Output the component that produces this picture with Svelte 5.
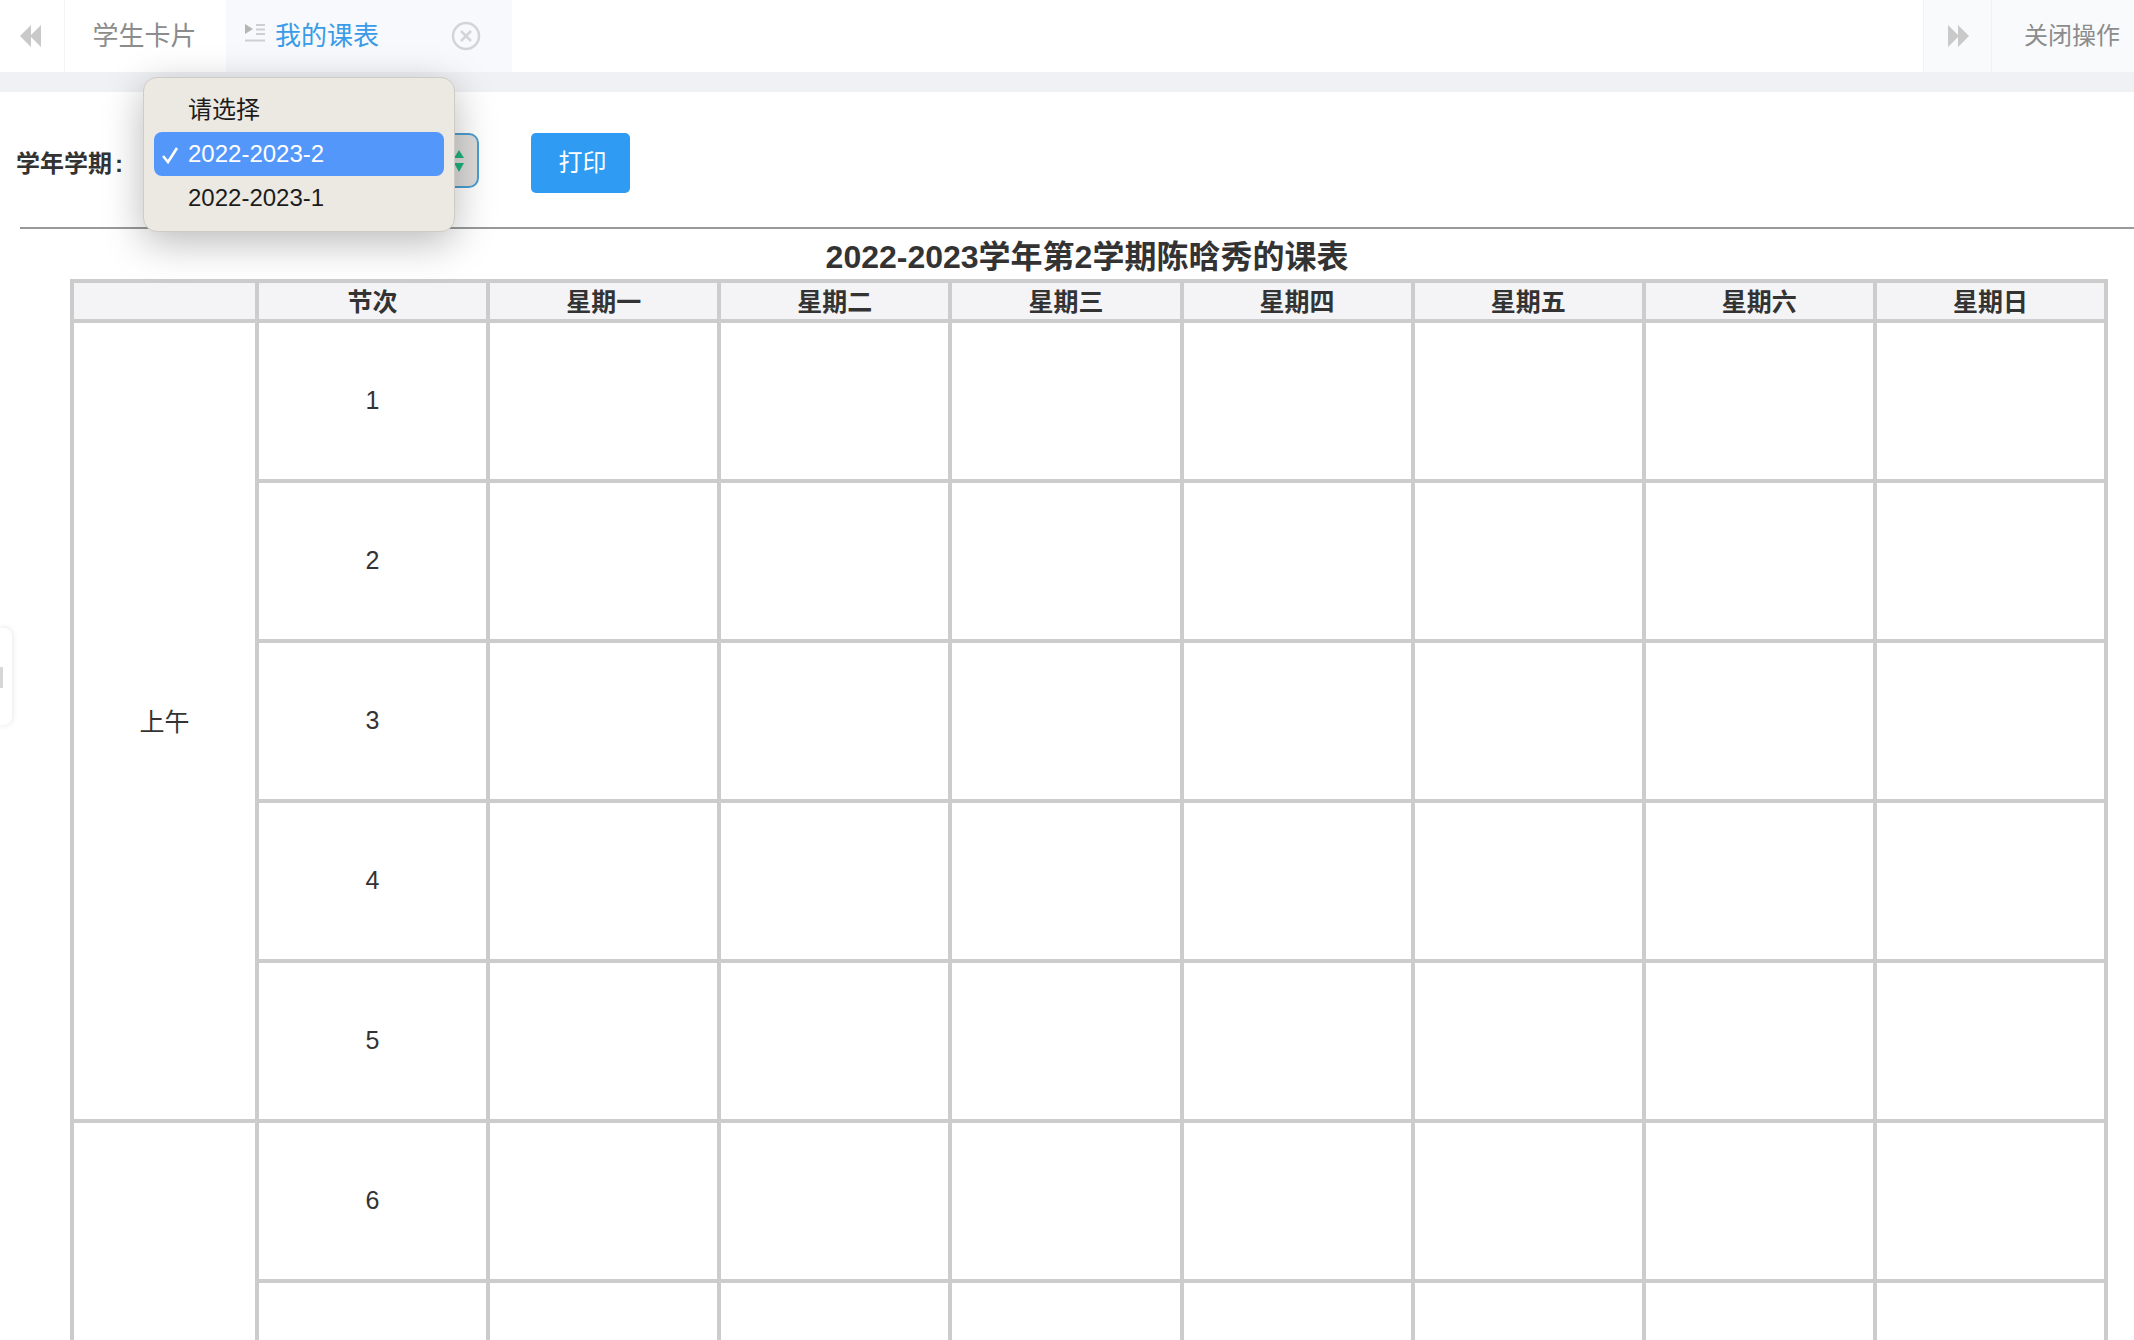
<script>
	const days = ['星期一', '星期二', '星期三', '星期四', '星期五', '星期六', '星期日'];
	const periods = [1, 2, 3, 4, 5, 6];
</script>

<div class="page">
	<div class="tabs">
		<button class="nav nav--left" aria-label="向左">
			<svg width="22" height="24" viewBox="0 0 22 24"><path d="M11 1v22L0 12zM21 1v22L10 12z" fill="#c9c9c9" /></svg>
		</button>
		<div class="tab">学生卡片</div>
		<div class="tab tab--active">
			<svg class="tab__icon" width="22" height="22" viewBox="0 0 22 22">
				<path d="M1 2l8 5-8 5z" fill="#b5b5b5" />
				<path d="M12 3h9M12 7.500h9M12 12h9M1 18.500h20" stroke="#cfcfcf" stroke-width="2" fill="none" />
			</svg>
			<span>我的课表</span>
			<svg class="tab__close" width="30" height="30" viewBox="0 0 30 30">
				<circle cx="15" cy="15" r="13" fill="none" stroke="#d4d4d4" stroke-width="2.500" />
				<path d="M10 10l10 10M20 10L10 20" stroke="#d4d4d4" stroke-width="2.500" />
			</svg>
		</div>
		<div class="tabs__space"></div>
		<button class="nav nav--right" aria-label="向右">
			<svg width="22" height="24" viewBox="0 0 22 24"><path d="M1 1v22l11-11zM11 1v22l11-11z" fill="#c9c9c9" /></svg>
		</button>
		<div class="tabs__close">关闭操作</div>
	</div>
	<div class="band"></div>

	<div class="filter">
		<label class="filter__label" for="term">学年学期<span class="colon">:</span></label>
		<div class="select" id="term">
			<svg class="select__arrows" width="12" height="24" viewBox="0 0 12 24">
				<path d="M6 1l5 8H1zM1 14h10l-5 9z" fill="#1fb57f" />
			</svg>
			<ul class="menu">
				<li>请选择</li>
				<li class="selected">
					<svg class="check" width="18" height="20" viewBox="0 0 18 20"><path d="M2 11l5 6L16 3" fill="none" stroke="#fff" stroke-width="2.600" /></svg>
					2022-2023-2
				</li>
				<li>2022-2023-1</li>
			</ul>
		</div>
		<button class="print">打印</button>
	</div>

	<div class="sheet">
		<h1>2022-2023学年第2学期陈晗秀的课表</h1>
		<table>
			<colgroup>
				<col class="col-part" />
				<col span="8" />
			</colgroup>
			<thead>
				<tr>
					<th></th>
					<th>节次</th>
					{#each days as day}
						<th>{day}</th>
					{/each}
				</tr>
			</thead>
			<tbody>
				{#each periods as period}
					<tr>
						{#if period === 1}
							<td rowspan="5">上午</td>
						{:else if period === 6}
							<td rowspan="2"></td>
						{/if}
						<td>{period}</td>
						{#each days as day}
							<td></td>
						{/each}
					</tr>
				{/each}
				<tr>
					<td></td>
					{#each days as day}
						<td></td>
					{/each}
				</tr>
			</tbody>
		</table>
	</div>

	<div class="handle"><span></span></div>
</div>

<style>
	:global(body) {
		margin: 0;
		background: #fff;
	}

	.page {
		position: relative;
		height: 1340px;
		overflow: hidden;
		font-family: 'Liberation Sans', 'Noto Sans CJK SC', sans-serif;
		color: #333;
	}

	.tabs {
		display: flex;
		height: 72px;
		align-items: stretch;
		color: #8c8c8c;
		font-size: 26px;
	}

	.nav {
		width: 65px;
		flex: none;
		padding: 0 3px 0 0;
		border: 0;
		background: #fff;
		display: flex;
		align-items: center;
		justify-content: center;
	}

	.nav--left {
		border-right: 1px solid #f3f4f6;
		border-bottom-left-radius: 12px;
	}

	.nav--right {
		width: 69px;
		padding: 0;
		background: #f9fafc;
		border-left: 1px solid #f1f2f5;
		border-right: 1px solid #f1f2f5;
	}

	.tab {
		width: 161px;
		padding: 0 2px 6px 0;
		box-sizing: border-box;
		display: flex;
		align-items: center;
		justify-content: center;
	}

	.tab--active {
		width: 286px;
		background: #f7f9fd;
		color: #3a9be8;
		justify-content: flex-start;
		padding-left: 18px;
	}

	.tab__icon {
		margin-right: 9px;
	}

	.tab__close {
		margin: 6px 0 0 72px;
	}

	.tabs__space {
		flex: 1;
	}

	.tabs__close {
		width: 142px;
		background: #f9fafc;
		display: flex;
		align-items: center;
		padding: 0 0 6px 32px;
		box-sizing: border-box;
		font-size: 24px;
	}

	.band {
		height: 20px;
		background: #f0f1f5;
	}

	.filter {
		height: 137px;
		padding: 41px 0 0 16px;
		box-sizing: border-box;
		display: flex;
		align-items: flex-start;
		border-bottom: 2px solid #999;
		position: relative;
	}

	.filter__label {
		width: 127px;
		font-size: 24px;
		font-weight: 700;
		line-height: 44px;
		margin-top: 9px;
	}

	.colon {
		margin-left: 3px;
	}

	.select {
		position: relative;
		width: 336px;
		height: 55px;
		box-sizing: border-box;
		border: 2px solid #4a9fd0;
		border-radius: 10px;
		background: linear-gradient(90deg, #f2f2f2, #dedcda);
	}

	.select__arrows {
		position: absolute;
		right: 12px;
		top: 14px;
	}

	.menu {
		position: absolute;
		left: -2px;
		top: -58px;
		width: 312px;
		height: 155px;
		box-sizing: border-box;
		margin: 0;
		padding: 10px;
		list-style: none;
		background: #ece8e2;
		border: 1px solid #cfcbc6;
		border-radius: 14px;
		box-shadow: 0 10px 40px rgba(0, 0, 0, 0.28);
		color: #1c1c1c;
		font-size: 24px;
	}

	.menu li {
		position: relative;
		height: 44px;
		line-height: 44px;
		padding-left: 34px;
		border-radius: 8px;
	}

	.menu .selected {
		background: #5397fb;
		color: #fff;
	}

	.check {
		position: absolute;
		left: 7px;
		top: 13px;
	}

	.print {
		margin-left: 52px;
		width: 99px;
		height: 60px;
		padding: 0 0 5px 4px;
		border: 0;
		border-radius: 5px;
		background: #2f9bf3;
		color: #fff;
		font: inherit;
		font-size: 24px;
	}

	.filter::before {
		content: '';
		position: absolute;
		left: 0;
		bottom: -2px;
		width: 20px;
		height: 2px;
		background: #fff;
	}

	.sheet {
		padding: 0 26px 0 70px;
	}

	h1 {
		margin: 0 0 0 -4px;
		height: 50px;
		line-height: 56px;
		text-align: center;
		font-size: 32px;
		font-weight: 700;
	}

	table {
		width: 100%;
		table-layout: fixed;
		border-collapse: collapse;
		border: 4px solid #ccc;
	}

	.col-part {
		width: 185px;
	}

	th,
	td {
		border: 4px solid #ccc;
		padding: 0 0 2px;
		box-sizing: border-box;
		text-align: center;
		font-size: 25px;
	}

	th {
		height: 40px;
		padding: 1px 0 0;
		line-height: 30px;
		background: #f4f4f6;
		font-weight: 700;
	}

	td {
		height: 160px;
		font-weight: 400;
	}

	.handle {
		position: absolute;
		left: 0;
		top: 628px;
		width: 12px;
		height: 97px;
		background: #fff;
		border-radius: 0 8px 8px 0;
		box-shadow: 0 0 6px rgba(0, 0, 0, 0.12);
	}

	.handle span {
		display: block;
		width: 3px;
		height: 21px;
		margin-top: 39px;
		background: #d6d6d6;
	}
</style>
